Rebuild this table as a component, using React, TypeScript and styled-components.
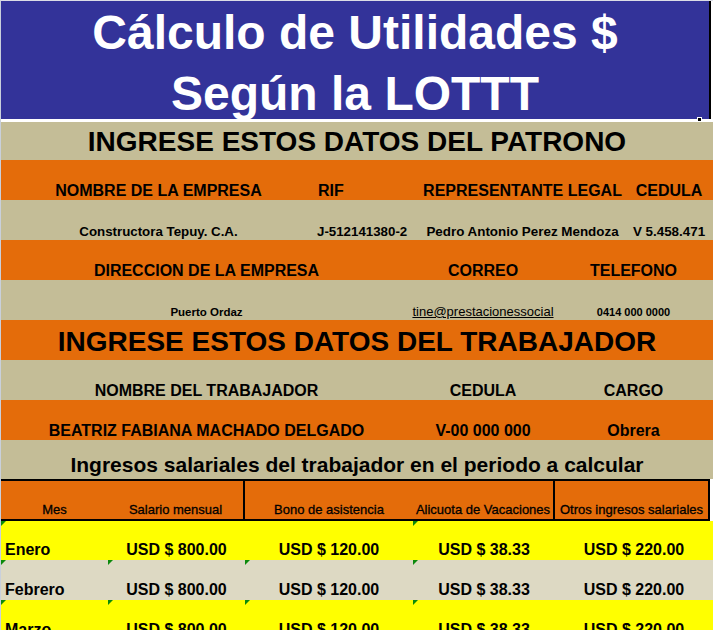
import React from "react";
import styled, { createGlobalStyle } from "styled-components";

const GlobalStyle = createGlobalStyle`
  html, body { margin: 0; padding: 0; background: #ffffff; }
  body { font-family: "Liberation Sans", Arial, sans-serif; color: #000; }
`;

const BLUE = "#333399";
const TAN = "#c4bd97";
const ORANGE = "#e46c0a";
const BEIGE = "#ddd9c3";
const YELLOW = "#ffff00";

const Page = styled.div`
  width: 712px;
  border-top: 1px solid #dcdde6;
  border-left: 1px solid #c9d0dc;
  overflow: hidden;
`;

const TitleBlock = styled.header`
  position: relative;
  width: 708px;
  height: 117px;
  padding-top: 1px;
  background: ${BLUE};
  border-right: 2px solid #000;
  color: #fff;
  font-weight: 700;
  font-size: 48px;
  line-height: 61px;
  text-align: center;
  margin-bottom: 3px;
`;

const TitleLine = styled.div`
  white-space: nowrap;
`;

const FillHandle = styled.span`
  position: absolute;
  left: 696px;
  bottom: -3px;
  width: 3px;
  height: 3px;
  background: #000;
  border: 1px solid #fff;
`;

const Row = styled.div<{ $bg: string; $h: number; $cols?: string }>`
  display: grid;
  grid-template-columns: ${(p) => p.$cols || "1fr"};
  align-items: end;
  height: ${(p) => p.$h}px;
  background: ${(p) => p.$bg};
`;

const Cell = styled.div<{
  $size: number;
  $weight?: number;
  $align?: "left" | "center";
  $pb?: number;
  $pl?: number;
  $underline?: boolean;
}>`
  font-size: ${(p) => p.$size}px;
  font-weight: ${(p) => p.$weight ?? 700};
  text-align: ${(p) => p.$align || "center"};
  padding-bottom: ${(p) => p.$pb ?? 0}px;
  padding-left: ${(p) => p.$pl ?? 0}px;
  text-decoration: ${(p) => (p.$underline ? "underline" : "none")};
  text-underline-offset: 1px;
  white-space: nowrap;
  line-height: 1.15;
`;

const TableHead = styled.div`
  display: flex;
  width: 709px;
  height: 38px;
  border-top: 2px solid #000;
  border-bottom: 2px solid #000;
  background: ${ORANGE};
`;

const HeadGroup = styled.div<{ $cols: string; $w: number }>`
  display: grid;
  grid-template-columns: ${(p) => p.$cols};
  align-items: end;
  width: ${(p) => p.$w}px;
  border-right: 2px solid #000;
`;

const HeadCell = styled.div`
  font-size: 13px;
  font-weight: 400;
  text-align: center;
  white-space: nowrap;
  padding-bottom: 1px;
  line-height: 1.15;
  color: #000;
  -webkit-text-stroke: 0.3px #000;
`;

const DataCell = styled.div<{ $align?: "left" | "center" }>`
  position: relative;
  height: 100%;
  display: flex;
  align-items: flex-end;
  justify-content: ${(p) => (p.$align === "left" ? "flex-start" : "center")};
  padding-left: ${(p) => (p.$align === "left" ? 4 : 0)}px;
  padding-bottom: 1px;
  box-sizing: border-box;
  font-size: 16px;
  font-weight: 700;
  white-space: nowrap;
  line-height: 1.15;
`;

const Marker = styled.span`
  position: absolute;
  left: 0;
  top: 0;
  width: 0;
  height: 0;
  border-top: 5px solid #0b8a0b;
  border-right: 5px solid transparent;
`;

const patronoCols = "315px 104px 205px 1fr";
const dirCols = "411px 142px 1fr";
const tableCols = "107px 137px 168px 142px 1fr";

type Month = {
  name: string;
  bg: string;
  h: number;
  markers: boolean[];
};

const months: Month[] = [
  { name: "Enero", bg: YELLOW, h: 39, markers: [true, false, false, true, false] },
  { name: "Febrero", bg: BEIGE, h: 40, markers: [true, true, true, true, false] },
  { name: "Marzo", bg: YELLOW, h: 40, markers: [true, true, true, true, false] },
];

const values = ["USD $ 800.00", "USD $ 120.00", "USD $ 38.33", "USD $ 220.00"];

export default function App() {
  return (
    <>
      <GlobalStyle />
      <Page>
        <TitleBlock>
          <TitleLine>Cálculo de Utilidades $</TitleLine>
          <TitleLine>Según la LOTTT</TitleLine>
          <FillHandle />
        </TitleBlock>

        <Row $bg={TAN} $h={38}>
          <Cell $size={28} $pb={2}>INGRESE ESTOS DATOS DEL PATRONO</Cell>
        </Row>

        <Row $bg={ORANGE} $h={40} $cols={patronoCols}>
          <Cell $size={16}>NOMBRE DE LA EMPRESA</Cell>
          <Cell $size={16} $align="left" $pl={2}>RIF</Cell>
          <Cell $size={16}>REPRESENTANTE LEGAL</Cell>
          <Cell $size={16}>CEDULA</Cell>
        </Row>

        <Row $bg={TAN} $h={40} $cols={patronoCols}>
          <Cell $size={13.3} $pb={1}>Constructora Tepuy. C.A.</Cell>
          <Cell $size={13.3} $pb={1} $align="left" $pl={1}>J-512141380-2</Cell>
          <Cell $size={13.4} $pb={1}>Pedro Antonio Perez Mendoza</Cell>
          <Cell $size={13.4} $pb={1}>V 5.458.471</Cell>
        </Row>

        <Row $bg={ORANGE} $h={40} $cols={dirCols}>
          <Cell $size={16}>DIRECCION DE LA EMPRESA</Cell>
          <Cell $size={16}>CORREO</Cell>
          <Cell $size={16}>TELEFONO</Cell>
        </Row>

        <Row $bg={TAN} $h={40} $cols={dirCols}>
          <Cell $size={11.5} $pb={1}>Puerto Ordaz</Cell>
          <Cell $size={13} $weight={400} $underline>tine@prestacionessocial</Cell>
          <Cell $size={11} $pb={1}>0414 000 0000</Cell>
        </Row>

        <Row $bg={ORANGE} $h={40}>
          <Cell $size={28} $pb={2}>INGRESE ESTOS DATOS DEL TRABAJADOR</Cell>
        </Row>

        <Row $bg={TAN} $h={40} $cols={dirCols}>
          <Cell $size={16}>NOMBRE DEL TRABAJADOR</Cell>
          <Cell $size={16}>CEDULA</Cell>
          <Cell $size={16}>CARGO</Cell>
        </Row>

        <Row $bg={ORANGE} $h={40} $cols={dirCols}>
          <Cell $size={16}>BEATRIZ FABIANA MACHADO DELGADO</Cell>
          <Cell $size={16}>V-00 000 000</Cell>
          <Cell $size={16}>Obrera</Cell>
        </Row>

        <Row $bg={TAN} $h={39}>
          <Cell $size={21} $pb={2}>Ingresos salariales del trabajador en el periodo a calcular</Cell>
        </Row>

        <TableHead>
          <HeadGroup $cols="107px 1fr" $w={242}>
            <HeadCell>Mes</HeadCell>
            <HeadCell>Salario mensual</HeadCell>
          </HeadGroup>
          <HeadGroup $cols="168px 1fr" $w={308}>
            <HeadCell>Bono de asistencia</HeadCell>
            <HeadCell>Alicuota de Vacaciones</HeadCell>
          </HeadGroup>
          <HeadGroup $cols="1fr" $w={153}>
            <HeadCell>Otros ingresos salariales</HeadCell>
          </HeadGroup>
        </TableHead>

        {months.map((m) => (
          <Row key={m.name} $bg={m.bg} $h={m.h} $cols={tableCols}>
            <DataCell $align="left">
              {m.markers[0] && <Marker />}
              {m.name}
            </DataCell>
            {values.map((v, i) => (
              <DataCell key={i}>
                {m.markers[i + 1] && <Marker />}
                {v}
              </DataCell>
            ))}
          </Row>
        ))}
      </Page>
    </>
  );
}
